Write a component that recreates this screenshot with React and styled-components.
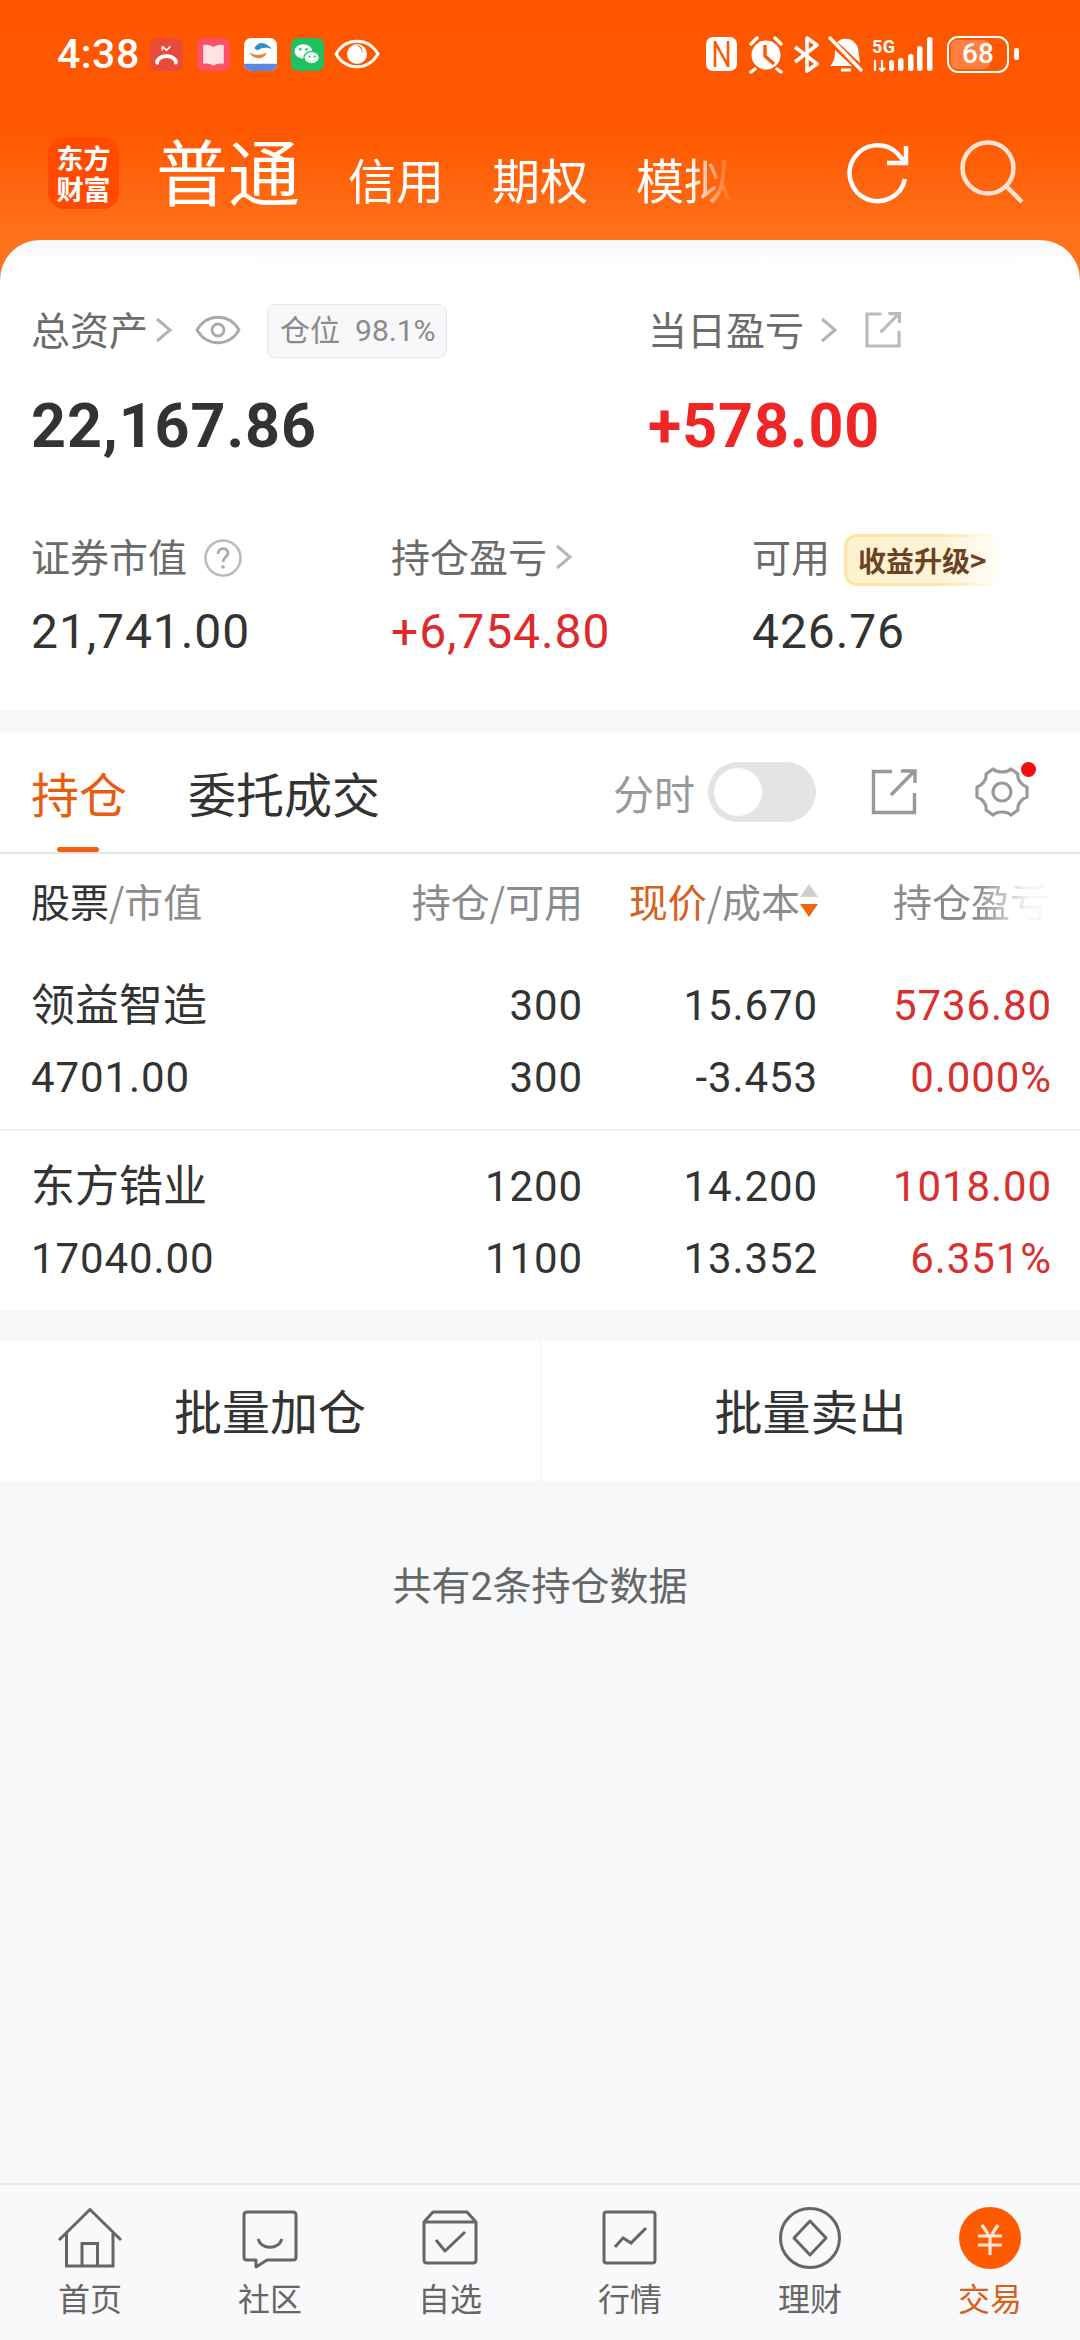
import React from 'react';
import styled, { createGlobalStyle } from 'styled-components';

const Global = createGlobalStyle`
    html, body { margin: 0; padding: 0; background: #f7f8fa; }
    * { box-sizing: border-box; }
    body { font-family: Roboto, "Noto Sans CJK SC", sans-serif; }
`;

const Page = styled.div`
    width: 1080px;
    height: 2340px;
    display: flex;
    flex-direction: column;
    background: #f7f8fa;
    overflow: hidden;
`;

const Header = styled.header`
    height: 280px;
    flex: none;
    background: linear-gradient(180deg, #ff5500 0, #ff5800 130px, #ff721c 240px, #ff721c 100%);
    color: #fff;
    display: flex;
    flex-direction: column;
`;

const StatusBar = styled.div`
    height: 100px;
    padding: 34px 61px 0 57px;
    display: flex;
    justify-content: space-between;
    align-items: flex-start;
`;

const StatusGroup = styled.div`
    display: flex;
    align-items: center;
    height: 40px;
    gap: ${props => props.gap}px;
    svg { display: block; flex: none; }
`;

const Clock = styled.span`
    font: 500 41px/40px Roboto, sans-serif;
    letter-spacing: 0.5px;
    width: 79px;
`;

const AppIcon = styled.div`
    width: 33px;
    height: 33px;
    border-radius: 7px;
    background: ${props => props.bg};
    overflow: hidden;
    flex: none;
`;

const Battery = styled.div`
    position: relative;
    margin-left: 12px;
    width: 62px;
    height: 37px;
    border: 2.5px solid #fff;
    border-radius: 11px;
    overflow: hidden;
    text-align: center;
`;

const BatteryLevel = styled.div`
    position: absolute;
    left: 2px;
    top: 2px;
    bottom: 2px;
    width: 68%;
    border-radius: 6px;
    background: rgba(255, 255, 255, 0.25);
`;

const BatteryText = styled.span`
    position: relative;
    font: 500 28px/32px Roboto, sans-serif;
`;

const BatteryTip = styled.div`
    margin-left: 5px;
    width: 5px;
    height: 12px;
    border-radius: 2px;
    background: #fff;
`;

const Nav = styled.div`
    height: 140px;
    padding: 37px 0 0 48px;
    display: flex;
    align-items: flex-start;
`;

const Logo = styled.div`
    width: 71px;
    height: 72px;
    border-radius: 16px;
    background: #ff4a00;
    display: flex;
    align-items: center;
    justify-content: center;
    text-align: center;
    font: 700 27px/31px "Noto Sans CJK SC", sans-serif;
    flex: none;
`;

const AccountTabs = styled.div`
    width: 579px;
    margin: -10px 0 0 37px;
    height: 84px;
    display: flex;
    align-items: flex-end;
    gap: 48px;
    -webkit-mask-image: linear-gradient(90deg, #000 535px, transparent 576px);
    mask-image: linear-gradient(90deg, #000 535px, transparent 576px);
`;

const AccountTab = styled.span`
    flex: none;
    font-family: "Noto Sans CJK SC", sans-serif;
    font-size: ${props => (props.active ? 72 : 48)}px;
    line-height: ${props => (props.active ? 84 : 66)}px;
`;

const HeaderActions = styled.div`
    margin: 5px 0 0 ${props => props.left}px;
    display: flex;
    gap: 49px;
    svg { display: block; }
`;

const AssetCard = styled.section`
    height: 470px;
    flex: none;
    margin-top: -40px;
    margin-bottom: 22px;
    background: linear-gradient(180deg, #f7f7fa 0, #fff 22px);
    border-radius: 40px 40px 0 0;
    padding: 64px 0 0 31px;
`;

const AssetRow = styled.div`
    display: grid;
    grid-template-columns: ${props => props.cols};
    margin-top: ${props => props.top || 0}px;
`;

const AssetCell = styled.div`
    display: flex;
    flex-direction: column;
`;

const LabelRow = styled.div`
    display: flex;
    align-items: center;
    height: 52px;
    color: #6b6b6b;
    font: 400 39px/52px "Noto Sans CJK SC", sans-serif;
    svg { display: block; flex: none; }
`;

const LabelText = styled.span`
    margin-bottom: 4px;
`;

const TotalValue = styled.div`
    margin-top: 34px;
    font: 700 61px/72px Roboto, sans-serif;
    letter-spacing: 0.9px;
    color: ${props => props.color || '#333'};
`;

const SubValue = styled.div`
    margin-top: 19px;
    font: 400 48px/60px Roboto, sans-serif;
    letter-spacing: 0.9px;
    color: ${props => props.color || '#333'};
`;

const PositionChip = styled.div`
    margin: 2px 0 0 26px;
    width: 180px;
    height: 54px;
    border: 1px solid #e6e6e9;
    border-radius: 8px;
    background: #f7f7f9;
    color: #8a8a8a;
    font: 400 30px/52px Roboto, "Noto Sans CJK SC", sans-serif;
    padding-left: 12px;
    display: flex;
    gap: 15px;
`;

const UpgradeChip = styled.div`
    margin: 5px 0 0 14px;
    width: 157px;
    height: 52px;
    padding-left: 11px;
    border-radius: 13px;
    border: 3px solid transparent;
    background:
        linear-gradient(90deg, #fdf1cf 0%, #fdf3d6 60%, #fffdf8 100%) padding-box,
        linear-gradient(90deg, #fbe6a6 0%, #fbe6a6 60%, #fffdf8 100%) border-box;
    color: #6b4323;
    font: 700 28px/46px "Noto Sans CJK SC", sans-serif;
    white-space: nowrap;
`;

const Holdings = styled.section`
    background: #fff;
    flex: none;
`;

const TabBar = styled.div`
    height: 122px;
    border-bottom: 2px solid #e6e6e6;
    padding: 0 51px 0 31px;
    display: flex;
    align-items: center;
`;

const HoldTab = styled.div`
    position: relative;
    font: 400 48px/120px "Noto Sans CJK SC", sans-serif;
    color: ${props => (props.active ? '#e85c10' : '#333')};
    margin-right: 61px;
    ${props => props.active && `
        &::after {
            content: '';
            position: absolute;
            left: 26px;
            bottom: 0;
            width: 42px;
            height: 5px;
            border-radius: 3px;
            background: #f0600f;
        }
    `}
`;

const TimeLabel = styled.span`
    margin-left: auto;
    font: 400 41px/1 "Noto Sans CJK SC", sans-serif;
    color: #999;
`;

const Toggle = styled.div`
    margin-left: 13px;
    width: 108px;
    height: 60px;
    border-radius: 30px;
    background: #e3e4e6;
    padding: 6px;
`;

const Knob = styled.div`
    width: 48px;
    height: 48px;
    border-radius: 50%;
    background: #fff;
`;

const ToolIcon = styled.div`
    position: relative;
    margin-left: ${props => props.gap}px;
    svg { display: block; }
`;

const RedDot = styled.span`
    position: absolute;
    top: -3px;
    right: -7px;
    width: 15px;
    height: 15px;
    border-radius: 50%;
    background: #f50d0d;
`;

const TableGrid = styled.div`
    display: grid;
    grid-template-columns: 1fr 200px 235px 234px;
    padding: 0 28px 0 31px;
`;

const TableHead = styled(TableGrid)`
    height: 105px;
    padding-bottom: 12px;
    align-items: center;
    font: 400 39px/1 "Noto Sans CJK SC", sans-serif;
    color: #8c8c8c;
`;

const HeadCell = styled.div`
    display: flex;
    align-items: center;
    justify-content: ${props => (props.left ? 'flex-start' : 'flex-end')};
    white-space: nowrap;
    b { font-weight: 400; color: ${props => props.strong || '#8c8c8c'}; }
`;

const FadedHead = styled.span`
    margin-right: 3px;
    -webkit-mask-image: linear-gradient(90deg, #000 85px, rgba(0,0,0,0.08) 135px);
    mask-image: linear-gradient(90deg, #000 85px, rgba(0,0,0,0.08) 135px);
`;

const SortArrows = styled.span`
    display: flex;
    flex-direction: column;
    gap: 7px;
    i { display: block; width: 0; height: 0; border-left: 9px solid transparent; border-right: 9px solid transparent; }
    i:first-child { border-bottom: 13px solid #cfcfcf; }
    i:last-child { border-top: 13px solid #f0640f; }
`;

const StockRow = styled(TableGrid)`
    height: ${props => props.h}px;
    padding-top: ${props => props.top}px;
    grid-auto-rows: 72px;
    align-items: center;
    border-bottom: ${props => (props.last ? 'none' : '2px solid #efefef')};
`;

const Cell = styled.div`
    font: 400 ${props => (props.cjk ? 44 : 42)}px/72px Roboto, "Noto Sans CJK SC", sans-serif;
    letter-spacing: ${props => (props.cjk ? 0 : 0.9)}px;
    text-align: ${props => (props.left ? 'left' : 'right')};
    color: ${props => (props.red ? '#d8302e' : '#333')};
    white-space: nowrap;
`;

const ActionBar = styled.div`
    margin-top: 30px;
    height: 140px;
    flex: none;
    background: #fff;
    display: grid;
    grid-template-columns: 1fr 1fr;
`;

const ActionButton = styled.div`
    font: 400 48px/136px "Noto Sans CJK SC", sans-serif;
    color: #333;
    text-align: center;
    ${props => props.divided && 'border-left: 1px solid #f1f1f3;'}
`;

const Summary = styled.div`
    flex: 1;
    padding-top: 79px;
    text-align: center;
    font: 400 39px/1.4 Roboto, "Noto Sans CJK SC", sans-serif;
    color: #666;
`;

const BottomNav = styled.nav`
    height: 157px;
    flex: none;
    background: #f9f9fb;
    border-top: 2px solid #e7e8ea;
    padding-top: 22px;
    display: grid;
    grid-template-columns: repeat(6, 180px);
`;

const NavItem = styled.div`
    display: flex;
    flex-direction: column;
    align-items: center;
    font: 400 32px/42px "Noto Sans CJK SC", sans-serif;
    color: ${props => (props.active ? '#d9601a' : '#666')};
    white-space: nowrap;
    svg { display: block; margin-bottom: 5px; }
`;

const Arrow = ({ ml = 6 }) => (
    <svg width="18" height="26" viewBox="0 0 18 26" style={{ marginLeft: ml }} fill="none" stroke="#b4b4b4" strokeWidth="3">
        <path d="M2 2 L15 13 L2 24" />
    </svg>
);

const ShareIcon = ({ size = 46, color = '#999', sw = 3.4 }) => (
    <svg width={size} height={size} viewBox="0 0 46 46" fill="none" stroke={color} strokeWidth={sw}>
        <path d="M21 2.5 H2.5 V43.5 H43.5 V24" />
        <path d="M20 26 L43 2.5 M30 2 H44 V14" />
    </svg>
);

function StatusIcons() {
    return (
        <StatusGroup gap={0}>
            <svg width="230" height="40" viewBox="0 0 230 40" fill="none">
                {/* nfc */}
                <rect x="1" y="3" width="31" height="34" rx="7" fill="#fff" />
                <path d="M10 7 V33 M23 7 V33 M10 8 L23 32" stroke="#ff5800" strokeWidth="2.6" />
                {/* alarm */}
                <circle cx="61" cy="21" r="14.5" fill="#fff" />
                <path d="M60 11 V22 L69 30" stroke="#ff5800" strokeWidth="3.4" />
                <path d="M46 10 L52 4 M76 10 L70 4 M50 35 L46 38 M72 35 L76 38" stroke="#fff" strokeWidth="3.4" strokeLinecap="round" />
                {/* bluetooth */}
                <path d="M90 13 L112 30 L102 37 V4 L112 11 L90 28" stroke="#fff" strokeWidth="3.6" strokeLinejoin="round" />
                {/* bell off */}
                <path d="M132 8 C138 2 150 4 153 14 L155 29 L138 13 Z M130 16 L147 32 H125 C129 28 130 24 130 16 Z" fill="#fff" />
                <path d="M125 4 L156 36" stroke="#fff" strokeWidth="3.4" strokeLinecap="round" />
                <path d="M136 36 H146" stroke="#fff" strokeWidth="3" />
                {/* 5G + signal */}
                <text x="167" y="19" fill="#fff" fontFamily="Roboto" fontWeight="700" fontSize="18" textLength="23">5G</text>
                <path d="M170 26 V37 M177 26 V37 M174 34 L177 37 L180 34" stroke="#fff" strokeWidth="2.2" />
                <rect x="184" y="26" width="5" height="11" rx="2.5" fill="#fff" />
                <rect x="193" y="24" width="5.5" height="13" rx="2.5" fill="#fff" />
                <rect x="203" y="20" width="5.5" height="17" rx="2.5" fill="#fff" />
                <rect x="212" y="12" width="5.5" height="25" rx="2.5" fill="#fff" />
                <rect x="222" y="3" width="5.5" height="34" rx="2.5" fill="#fff" />
            </svg>
            <Battery>
                <BatteryLevel />
                <BatteryText>68</BatteryText>
            </Battery>
            <BatteryTip />
        </StatusGroup>
    );
}

export default function App() {
    return (
        <Page>
            <Global />
            <Header>
                <StatusBar>
                    <StatusGroup gap={14}>
                        <Clock>4:38</Clock>
                        <AppIcon bg="#ea4a38">
                            <svg width="33" height="33" viewBox="0 0 32 32" fill="none" stroke="#fff">
                                <path d="M7 24 V22 C11 16 21 16 25 22 V24" strokeWidth="3.6" strokeLinecap="round" />
                                <path d="M12 8 L16 12 L20 8 M12 8 V12" strokeWidth="1.6" />
                            </svg>
                        </AppIcon>
                        <AppIcon bg="#fb5364">
                            <svg width="33" height="33" viewBox="0 0 32 32">
                                <path d="M6 7 C10 6 14 7 16 9 C18 7 22 6 26 7 V25 C22 24 18 25 16 27 C14 25 10 24 6 25 Z" fill="#ffe3e4" />
                            </svg>
                        </AppIcon>
                        <AppIcon bg="#fff">
                            <svg width="33" height="33" viewBox="0 0 32 32" fill="none">
                                <path d="M10 10 C14 2 22 4 27 11 C21 8 16 10 13 12 Z" fill="#2f90c9" />
                                <path d="M5 14 C10 17 16 17 22 14 C20 21 10 22 5 14 Z" fill="#e08a2c" />
                                <rect x="0" y="25" width="32" height="7" fill="#5d86df" />
                            </svg>
                        </AppIcon>
                        <AppIcon bg="#1fc25f">
                            <svg width="33" height="33" viewBox="0 0 32 32">
                                <ellipse cx="12" cy="13" rx="8.5" ry="7" fill="#fff" />
                                <ellipse cx="20" cy="19" rx="7.5" ry="6" fill="#e9fff1" stroke="#1fc25f" strokeWidth="1.2" />
                                <circle cx="9" cy="11" r="1.2" fill="#1fc25f" />
                                <circle cx="15" cy="11" r="1.2" fill="#1fc25f" />
                                <circle cx="18" cy="18" r="1" fill="#1fc25f" />
                                <circle cx="23" cy="18" r="1" fill="#1fc25f" />
                            </svg>
                        </AppIcon>
                        <svg width="46" height="32" viewBox="0 0 46 32" fill="none" style={{ marginLeft: -4 }}>
                            <path d="M2 16 C12 -1 34 -1 44 16 C34 33 12 33 2 16 Z" stroke="#fff" strokeWidth="3" />
                            <circle cx="23" cy="16" r="10" fill="#fff" />
                            <path d="M22 7 A 9 9 0 0 1 28 15 A 6 6 0 0 0 22 7" fill="#ff5800" />
                        </svg>
                    </StatusGroup>
                    <StatusIcons />
                </StatusBar>
                <Nav>
                    <Logo>东方<br />财富</Logo>
                    <AccountTabs>
                        <AccountTab active>普通</AccountTab>
                        <AccountTab>信用</AccountTab>
                        <AccountTab>期权</AccountTab>
                        <AccountTab>模拟</AccountTab>
                    </AccountTabs>
                    <HeaderActions left={112}>
                        <svg width="64" height="64" viewBox="0 0 64 64" fill="none" stroke="#fff" strokeWidth="4.5">
                            <path d="M58 37 A 28 28 0 1 1 50 11 L 58 20" />
                            <path d="M59 4 V21 H40" />
                        </svg>
                        <svg width="66" height="66" viewBox="0 0 66 66" fill="none" stroke="#ffe3d2" strokeWidth="4.5" style={{ marginTop: -2 }}>
                            <circle cx="28" cy="28" r="25.5" />
                            <path d="M47 47 L62 62" />
                        </svg>
                    </HeaderActions>
                </Nav>
            </Header>

            <AssetCard>
                <AssetRow cols="617px 1fr">
                    <AssetCell>
                        <LabelRow>
                            <LabelText>总资产</LabelText>
                            <Arrow ml={7} />
                            <svg width="46" height="32" viewBox="0 0 46 32" fill="none" stroke="#aaa" strokeWidth="2.8" style={{ marginLeft: 22 }}>
                                <path d="M2 16 C12 -1 34 -1 44 16 C34 33 12 33 2 16 Z" />
                                <circle cx="23" cy="16" r="6" />
                            </svg>
                            <PositionChip>
                                <span>仓位</span>
                                <span>98.1%</span>
                            </PositionChip>
                        </LabelRow>
                        <TotalValue>22,167.86</TotalValue>
                    </AssetCell>
                    <AssetCell>
                        <LabelRow>
                            <LabelText>当日盈亏</LabelText>
                            <Arrow ml={16} />
                            <span style={{ width: 27 }} />
                            <ShareIcon size={36} color="#bbb" sw={4} />
                        </LabelRow>
                        <TotalValue color="#ee2626">+578.00</TotalValue>
                    </AssetCell>
                </AssetRow>
                <AssetRow cols="360px 361px 1fr" top={69}>
                    <AssetCell>
                        <LabelRow>
                            <LabelText>证券市值</LabelText>
                            <svg width="38" height="38" viewBox="0 0 38 38" fill="none" style={{ marginLeft: 17, marginTop: 2 }}>
                                <circle cx="19" cy="19" r="17.5" stroke="#bbb" strokeWidth="2.6" />
                                <path d="M14 15 C14 8 24 8 24 14 C24 18 19 18 19 23" stroke="#aaa" strokeWidth="2.8" />
                                <circle cx="19" cy="28" r="1.8" fill="#aaa" />
                            </svg>
                        </LabelRow>
                        <SubValue>21,741.00</SubValue>
                    </AssetCell>
                    <AssetCell>
                        <LabelRow>
                            <LabelText>持仓盈亏</LabelText>
                            <Arrow ml={8} />
                        </LabelRow>
                        <SubValue color="#de2a2a">+6,754.80</SubValue>
                    </AssetCell>
                    <AssetCell>
                        <LabelRow>
                            <LabelText>可用</LabelText>
                            <UpgradeChip>收益升级&gt;</UpgradeChip>
                        </LabelRow>
                        <SubValue>426.76</SubValue>
                    </AssetCell>
                </AssetRow>
            </AssetCard>

            <Holdings>
                <TabBar>
                    <HoldTab active>持仓</HoldTab>
                    <HoldTab>委托成交</HoldTab>
                    <TimeLabel>分时</TimeLabel>
                    <Toggle><Knob /></Toggle>
                    <ToolIcon gap={55}><ShareIcon /></ToolIcon>
                    <ToolIcon gap={58}>
                        <svg width="54" height="54" viewBox="0 0 54 54" fill="none" stroke="#999" strokeWidth="3.2" strokeLinejoin="round">
                            <path d="M18 4 C22 8 32 8 36 4 L43 9 C42 14 46 20 52 22 V32 C46 34 42 40 43 45 L36 50 C32 46 22 46 18 50 L11 45 C12 40 8 34 2 32 V22 C8 20 12 14 11 9 Z" />
                            <circle cx="27" cy="27" r="9" />
                        </svg>
                        <RedDot />
                    </ToolIcon>
                </TabBar>
                <TableHead>
                    <HeadCell left strong="#333"><b>股票</b>/市值</HeadCell>
                    <HeadCell>持仓/可用</HeadCell>
                    <HeadCell strong="#d9601a">
                        <b>现价</b>/成本
                        <SortArrows><i /><i /></SortArrows>
                    </HeadCell>
                    <HeadCell><FadedHead>持仓盈亏</FadedHead></HeadCell>
                </TableHead>
                <StockRow h={172} top={11}>
                    <Cell left cjk>领益智造</Cell>
                    <Cell>300</Cell>
                    <Cell>15.670</Cell>
                    <Cell red>5736.80</Cell>
                    <Cell left>4701.00</Cell>
                    <Cell>300</Cell>
                    <Cell>-3.453</Cell>
                    <Cell red>0.000%</Cell>
                </StockRow>
                <StockRow h={180} top={20} last>
                    <Cell left cjk>东方锆业</Cell>
                    <Cell>1200</Cell>
                    <Cell>14.200</Cell>
                    <Cell red>1018.00</Cell>
                    <Cell left>17040.00</Cell>
                    <Cell>1100</Cell>
                    <Cell>13.352</Cell>
                    <Cell red>6.351%</Cell>
                </StockRow>
            </Holdings>

            <ActionBar>
                <ActionButton>批量加仓</ActionButton>
                <ActionButton divided>批量卖出</ActionButton>
            </ActionBar>

            <Summary>共有2条持仓数据</Summary>

            <BottomNav>
                <NavItem>
                    <svg width="66" height="64" viewBox="0 0 64 64" fill="none" stroke="#666" strokeWidth="3">
                        <path d="M1 33 L32 2.5 L63 33 M8.5 26 V59 H55 V26 M24 59 V36.5 H39.5 V59" />
                    </svg>
                    首页
                </NavItem>
                <NavItem>
                    <svg width="64" height="64" viewBox="0 0 64 64" fill="none" stroke="#666" strokeWidth="3" strokeLinejoin="round">
                        <path d="M9 5 H55 Q58 5 58 8 V50 Q58 53 55 53 H29 L18 60 V53 H9 Q6 53 6 50 V8 Q6 5 9 5 Z" />
                        <path d="M20 32 C24 43 40 43 44 32" />
                    </svg>
                    社区
                </NavItem>
                <NavItem>
                    <svg width="64" height="64" viewBox="0 0 64 64" fill="none" stroke="#666" strokeWidth="3" strokeLinejoin="round">
                        <path d="M6 15 L15 5 H49 L58 15 V53 Q58 56 55 56 H9 Q6 56 6 53 Z M6 15 H58" />
                        <path d="M18 33 L27 44 L47 25" />
                    </svg>
                    自选
                </NavItem>
                <NavItem>
                    <svg width="64" height="64" viewBox="0 0 64 64" fill="none" stroke="#666" strokeWidth="3">
                        <rect x="6" y="5" width="51" height="51" rx="2.5" />
                        <path d="M17 40 L25 31 L33 36 L48 21" />
                    </svg>
                    行情
                </NavItem>
                <NavItem>
                    <svg width="64" height="64" viewBox="0 0 64 64" fill="none" stroke="#666" strokeWidth="3" strokeLinejoin="round">
                        <circle cx="32" cy="31" r="29.5" />
                        <path d="M32 14 L48 31 L32 48 L16 31 Z" />
                    </svg>
                    理财
                </NavItem>
                <NavItem active>
                    <svg width="64" height="64" viewBox="0 0 64 64" fill="none" stroke="#ffe8da" strokeWidth="3.2">
                        <circle cx="32" cy="31" r="31" fill="#ff5a00" stroke="none" />
                        <path d="M24 18 L30 27 M40 18 L34 27 M20 29 H44 M20 38 H44 M32 27 V48" />
                    </svg>
                    交易
                </NavItem>
            </BottomNav>
        </Page>
    );
}
